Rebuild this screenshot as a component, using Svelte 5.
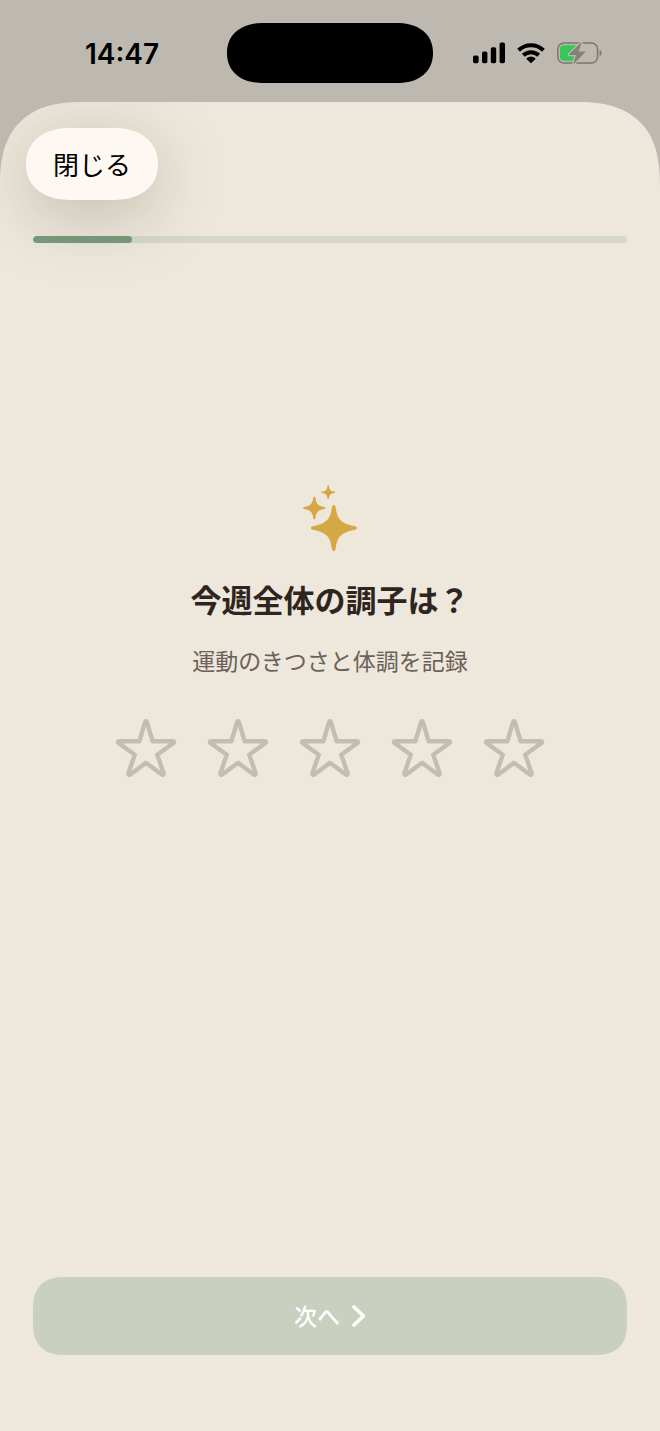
<script>
  let step = $state(1);
  let rating = $state(0);

  const totalSteps = 6;
  const stars = [1, 2, 3, 4, 5];
</script>

<div class="screen">
  <header class="status-bar">
    <div class="status-left">
      <time class="clock">14:47</time>
    </div>
    <div class="island"></div>
    <div class="status-right">
      <svg width="32" height="22" viewBox="0 0 32 22" aria-hidden="true">
        <rect x="0" y="13.6" width="5.6" height="7.6" rx="1.7" />
        <rect x="9" y="9.6" width="5.4" height="11.6" rx="1.7" />
        <rect x="17.8" y="5.2" width="5.4" height="16" rx="1.7" />
        <rect x="26.6" y="0.6" width="5.4" height="20.6" rx="1.7" />
      </svg>
      <svg width="28" height="22" viewBox="0 0 28 22" aria-hidden="true">
        <g fill="none" stroke="#000" stroke-width="4">
          <path d="M1.6 8.2a17.7 17.7 0 0 1 24.800 0" />
          <path d="M6.3 13.3a11 11 0 0 1 15.400 0" />
        </g>
        <path d="M14 21.3l-4.300-4.100q-.5-.6.2-1.100a6.600 6.600 0 0 1 8.200 0q.7.5.2 1.100z" />
      </svg>
      <svg width="45" height="22" viewBox="0 0 45 22" aria-hidden="true">
        <rect x="0.8" y="1" width="39.8" height="20" rx="6.2" fill="none" stroke="#7b776f" stroke-width="1.5" />
        <path d="M42.6 7.8v6.600q2-1 2-3.300t-2-3.300z" fill="#7b776f" />
        <path d="M7 3.300h12v15.400H7a4 4 0 0 1-4-4v-7.400a4 4 0 0 1 4-4z" fill="#35c75a" />
        <path
          d="M24.100.6L12.200 12q-.5.800.3.900h6.500l-2.600 8.700q0 .6.600.2L28.100 10.300q.5-.8-.4-.9h-6.200L24.600.8q0-.6-.5-.2z"
          fill="#858178"
          stroke="#bdb8b0"
          stroke-width="2.6"
          paint-order="stroke"
        />
      </svg>
    </div>
  </header>

  <main class="sheet">
    <nav class="toolbar">
      <button class="close-button">閉じる</button>
    </nav>

    <div
      class="progress"
      role="progressbar"
      aria-labelledby="question-title"
      aria-valuenow={step}
      aria-valuemin="0"
      aria-valuemax={totalSteps}
    >
      <div class="progress-fill" style="width: {(step / totalSteps) * 100}%"></div>
    </div>

    <section class="question">
      <svg class="sparkles" width="54" height="66" viewBox="0 0 54 66" aria-hidden="true">
        <path d="M30.8 20q1.5 0 1.8 2C34.4 34.5 38 38.5 52 41.2q2 .3 2 1.800t-2 1.800C38 47.5 34.4 51.5 32.6 64q-.3 2-1.800 2t-1.800-2C27.2 51.5 23.6 47.5 9.8 44.8q-2-.3-2-1.800t2-1.800C23.6 38.5 27.2 34.5 29 22q.3-2 1.800-2z" />
        <path d="M11.3 11.8q.9 0 1.100 1.200C13.3 19 15 21 21.4 21.9q1.200.2 1.200 1.100t-1.200 1.100C15 25 13.3 27 12.4 33q-.2 1.200-1.100 1.200T10.2 33C9.3 27 7.6 25 1.2 24.1Q0 23.9 0 23t1.200-1.100C7.6 21 9.3 19 10.2 13q.2-1.200 1.100-1.200z" />
        <path d="M25.2.2q.6 0 .7.700C26.5 4.9 27.6 6 31.3 6.5q.8.100.8.700t-.8.700C27.6 8.4 26.5 9.5 25.9 13.4q-.1.700-.7.700t-.7-.7C23.9 9.5 22.8 8.4 19.1 7.9q-.8-.1-.8-.7t.8-.7C22.8 6 23.9 4.9 24.5.9q.1-.7.700-.7z" />
      </svg>
      <h1 id="question-title">今週全体の調子は&#xFF1F;</h1>
      <p>運動のきつさと体調を記録</p>

      <div class="stars">
        {#each stars as star}
          <button
            class="star"
            class:selected={star <= rating}
            aria-label={String(star)}
            onclick={() => (rating = star)}
          >
            <svg width="60" height="58" viewBox="0 0 60 58" aria-hidden="true">
              <path
                d="M28.9 3.3Q30 1.3 31.1 3.3L36.5 22.2H56.5Q59.2 22.4 57.2 24.2L41.2 35.7L47.6 54.2Q47.7 56.4 45.7 55.5L30 43.8L14.3 55.5Q12.3 56.4 12.4 54.2L18.8 35.7L2.8 24.2Q.8 22.4 3.5 22.2H23.5Z"
              />
            </svg>
          </button>
        {/each}
      </div>
    </section>

    <button class="next-button" disabled={rating === 0} onclick={() => (step += 1)}>
      <span>次へ</span>
      <svg width="14" height="22" viewBox="0 0 14 22" aria-hidden="true">
        <path d="M2 2l9.500 9L2 20" />
      </svg>
    </button>
  </main>
</div>

<style>
  :global(body) {
    background: #bdb8b0;
  }

  .screen {
    display: flex;
    flex-direction: column;
    min-height: 100vh;
    font-family: "Inter", "Noto Sans CJK JP", sans-serif;
    color: #000;
  }

  button {
    border: none;
    padding: 0;
    font-family: inherit;
    cursor: pointer;
  }

  svg {
    display: block;
    overflow: visible;
  }

  /* Status bar */
  .status-bar {
    display: grid;
    grid-template-columns: 1fr 206px 1fr;
    align-items: center;
    padding: 23px 0 19px;
  }

  .status-left,
  .status-right {
    display: flex;
    justify-content: center;
    align-items: center;
  }

  .status-left {
    padding: 2px 0 0 17px;
  }

  .status-right {
    gap: 12px;
    padding-right: 18px;
  }

  .clock {
    font-size: 28px;
    font-weight: 600;
    line-height: 32px;
  }

  .island {
    height: 60px;
    border-radius: 36px / 30px;
    corner-shape: superellipse(1.15);
    background: #000;
  }

  /* Sheet */
  .sheet {
    flex: 1;
    display: flex;
    flex-direction: column;
    padding: 26px 33px 76px;
    border-radius: 84px 84px 0 0;
    corner-shape: superellipse(1.35);
    background: #eee7dc;
    overflow: hidden;
  }

  .toolbar {
    margin-left: -7px;
  }

  .close-button {
    position: relative;
    height: 72px;
    padding: 0 27px 2px;
    border-radius: 44px / 36px;
    corner-shape: superellipse(1.15);
    background: #fdf8f1;
    box-shadow: 0 14px 68px rgba(60, 60, 30, 0.26);
    color: #000;
    font-size: 26px;
  }

  .progress {
    height: 7px;
    margin-top: 36px;
    border-radius: 4px;
    background: #d5d7c8;
    overflow: hidden;
  }

  .progress-fill {
    height: 100%;
    border-radius: 4px;
    background: #789c7c;
  }

  /* Question */
  .question {
    flex: 1;
    display: flex;
    flex-direction: column;
    align-items: center;
    padding-top: 242px;
    text-align: center;
  }

  .sparkles {
    fill: #d4a843;
  }

  h1 {
    margin: 29px 0 0;
    color: #2e2521;
    font-size: 31px;
    font-weight: 700;
    line-height: 42px;
  }

  p {
    margin: 24px 0 0;
    color: #6b6158;
    font-size: 23px;
    line-height: 32px;
  }

  .stars {
    display: flex;
    gap: 32px;
    margin-top: 41px;
  }

  .star {
    background: none;
  }

  .star path {
    fill: none;
    stroke: #c5bdb2;
    stroke-width: 4.4;
    stroke-linejoin: round;
  }

  .star.selected path {
    fill: #d4a843;
    stroke: #d4a843;
  }

  .next-button {
    display: flex;
    justify-content: center;
    align-items: center;
    gap: 12px;
    height: 78px;
    border-radius: 32px;
    corner-shape: superellipse(1.3);
    background: #789c7c;
    color: #fff;
    font-size: 23px;
    font-weight: 500;
  }

  .next-button span {
    padding-bottom: 2px;
  }

  .next-button:disabled {
    background: #cad0c0;
    cursor: default;
  }

  .next-button path {
    fill: none;
    stroke: #fff;
    stroke-width: 3.6;
    stroke-linecap: round;
    stroke-linejoin: round;
  }
</style>
